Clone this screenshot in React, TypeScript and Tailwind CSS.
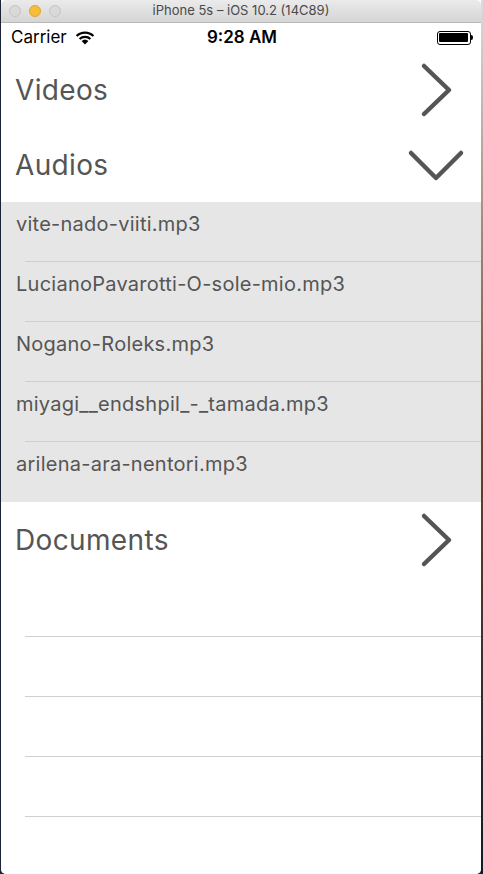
import { ReactNode } from 'react';

const audios = [
  'vite-nado-viiti.mp3',
  'LucianoPavarotti-O-sole-mio.mp3',
  'Nogano-Roleks.mp3',
  'miyagi__endshpil_-_tamada.mp3',
  'arilena-ara-nentori.mp3',
];

const ChevronRight = () => (
  <svg width="34" height="56" viewBox="0 0 34 56" fill="none" className="mr-[28px]">
    <path d="M5 4 L30 28 L5 52" stroke="#555555" strokeWidth="4.5" strokeLinecap="round" strokeLinejoin="round" />
  </svg>
);

const ChevronDown = () => (
  <svg width="58" height="34" viewBox="0 0 58 34" fill="none" className="mr-[16px]">
    <path d="M4 5 L29 30 L54 5" stroke="#555555" strokeWidth="4.5" strokeLinecap="round" strokeLinejoin="round" />
  </svg>
);

const SectionHeader = ({ title, icon }: { title: string; icon: ReactNode }) => (
  <div className="flex h-[75px] shrink-0 items-center justify-between bg-white pl-[14px]">
    <span className="text-[28px] tracking-[0.35px] text-[#555555]">{title}</span>
    {icon}
  </div>
);

const Cell = ({ label, last, gray }: { label?: string; last?: boolean; gray?: boolean }) => (
  <div className={`flex h-[60px] shrink-0 flex-col ${gray ? 'bg-[#e6e6e6]' : 'bg-white'}`}>
    <div className="flex flex-1 items-start pl-[15px] pt-[7px]">
      {label && <span className="text-[20px] tracking-[0.25px] text-[#555555]">{label}</span>}
    </div>
    {!last && <div className="ml-6 h-px bg-[#cfcfcf]" />}
  </div>
);

const Wifi = () => (
  <svg width="20" height="14" viewBox="0 0 20 14">
    <path d="M10 13.5 L6.6 10 A5 5 0 0 1 13.4 10 Z" fill="#000" />
    <path d="M4.6 8 A7.8 7.8 0 0 1 15.4 8" stroke="#000" strokeWidth="2.2" fill="none" />
    <path d="M1.6 5 A12 12 0 0 1 18.4 5" stroke="#000" strokeWidth="2.2" fill="none" />
  </svg>
);

const Battery = () => (
  <div className="flex items-center">
    <div className="flex h-[14px] w-[34px] items-center rounded-[3px] border border-black p-[1.5px]">
      <div className="h-full w-full rounded-[1px] bg-black" />
    </div>
    <div className="h-[5px] w-[2px] rounded-r-sm bg-black" />
  </div>
);

export default function App() {
  return (
    <div className="flex h-[874px] w-[483px] bg-[#1c2a3c]" style={{ fontFamily: 'Inter, "Liberation Sans", sans-serif' }}>
      <div className="w-px shrink-0 bg-[#1b2433]" />
      <div className="flex w-[480px] shrink-0 flex-col overflow-hidden rounded-b-[5px] bg-white">
        {/* simulator title bar */}
        <div className="relative flex h-[23px] shrink-0 items-center justify-center rounded-t-[5px] border-b border-[#b9b9b9] bg-gradient-to-b from-[#ebebeb] to-[#d5d5d5]">
          <div className="absolute left-[8px] top-[5px] flex gap-2">
            <div className="h-3 w-3 rounded-full border border-[#c5c5c5] bg-[#d9d9d9]" />
            <div className="h-3 w-3 rounded-full border border-[#e0a52f] bg-[#f6bd3b]" />
            <div className="h-3 w-3 rounded-full border border-[#c5c5c5] bg-[#d9d9d9]" />
          </div>
          <span className="text-[13px] text-[#4a4a4a]">iPhone 5s – iOS 10.2 (14C89)</span>
        </div>
        {/* status bar */}
        <div className="flex h-[29px] shrink-0 items-center justify-between pl-[10px] pr-[8px]">
          <div className="flex w-[120px] items-center gap-2">
            <span className="text-[17px] text-black">Carrier</span>
            <Wifi />
          </div>
          <span className="text-[17px] font-semibold text-black">9:28 AM</span>
          <div className="flex w-[120px] justify-end">
            <Battery />
          </div>
        </div>
        <SectionHeader title="Videos" icon={<ChevronRight />} />
        <SectionHeader title="Audios" icon={<ChevronDown />} />
        {audios.map((a, i) => (
          <Cell key={a} label={a} gray last={i === audios.length - 1} />
        ))}
        <SectionHeader title="Documents" icon={<ChevronRight />} />
        <Cell />
        <Cell />
        <Cell />
        <Cell />
        <Cell />
      </div>
      <div className="w-[2px] shrink-0 bg-gradient-to-b from-[#dcdcdc] via-[#7a3b2a] to-[#121a26]" />
    </div>
  );
}
